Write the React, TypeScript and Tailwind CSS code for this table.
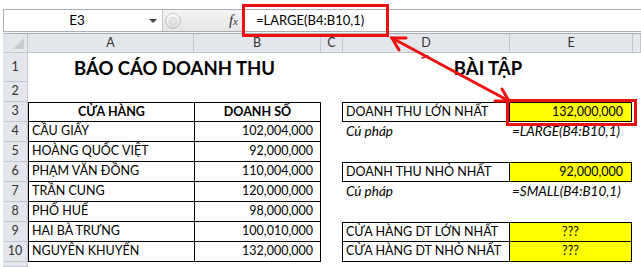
import React from 'react';

type Row = {
  n: number;
  a?: string;
  b?: string;
  d?: string;
  e?: string;
  kind?: 'box' | 'syntax' | 'none';
  eAlign?: 'right' | 'center' | 'left';
};

const rows: Row[] = [
  { n: 3, a: 'CỬA HÀNG', b: 'DOANH SỐ', d: 'DOANH THU LỚN NHẤT', e: '132,000,000', kind: 'box', eAlign: 'right' },
  { n: 4, a: 'CẦU GIẤY', b: '102,004,000', d: 'Cú pháp', e: '=LARGE(B4:B10,1)', kind: 'syntax' },
  { n: 5, a: 'HOÀNG QUỐC VIỆT', b: '92,000,000', kind: 'none' },
  { n: 6, a: 'PHẠM VĂN ĐỒNG', b: '110,004,000', d: 'DOANH THU NHỎ NHẤT', e: '92,000,000', kind: 'box', eAlign: 'right' },
  { n: 7, a: 'TRẦN CUNG', b: '120,000,000', d: 'Cú pháp', e: '=SMALL(B4:B10,1)', kind: 'syntax' },
  { n: 8, a: 'PHỐ HUẾ', b: '98,000,000', kind: 'none' },
  { n: 9, a: 'HAI BÀ TRƯNG', b: '100,010,000', d: 'CỬA HÀNG DT LỚN NHẤT', e: '???', kind: 'box', eAlign: 'center' },
  { n: 10, a: 'NGUYỄN KHUYẾN', b: '132,000,000', d: 'CỬA HÀNG DT NHỎ NHẤT', e: '???', kind: 'box', eAlign: 'center' },
];

function RowHead({ n, h = 'h-[20px]' }: { n?: number; h?: string }) {
  return (
    <div className={`w-[25px] ${h} shrink-0 bg-[#e3e6eb] border-r border-b border-[#c3c7cd] flex items-center justify-center text-[12.5px] not-italic font-normal text-[#333]`}>
      {n}
    </div>
  );
}

export default function App() {
  return (
    <div className="relative w-[641px] h-[267px] overflow-hidden bg-white text-black font-[family-name:Lato,'Liberation_Sans',sans-serif]">
      {/* formula bar */}
      <div className="h-[9px] bg-white" />
      <div className="flex h-[22px] border-t border-[#a9afb7] ml-[3px]">
        <div className="w-[159px] border-l border-[#a9afb7] bg-white flex items-center relative">
          <span className="flex-1 text-center text-[13.5px] pr-[12px]">E3</span>
          <span className="absolute right-[5px] top-[9px] w-0 h-0 border-l-[4px] border-r-[4px] border-t-[4px] border-l-transparent border-r-transparent border-t-[#444]" />
        </div>
        <div className="w-[80px] bg-gradient-to-b from-[#f4f4f4] to-[#e6e6e6] border-l border-[#c2c6cc] flex items-center">
          <div className="ml-[2px] w-[16px] h-[16px] rounded-full border border-[#c4c4c4] bg-gradient-to-b from-[#ffffff] to-[#d8d8d8] flex items-center justify-center">
            <div className="w-[8px] h-[8px] rounded-full bg-[#e8e8e8] border border-[#cfcfcf]" />
          </div>
          <span className="ml-auto mr-[4px] font-[family-name:'Liberation_Serif',serif] italic text-[15px] text-[#333] leading-none">
            f<span className="text-[11px]">x</span>
          </span>
        </div>
        <div className="flex-1 bg-white flex items-center pl-[14px] text-[13px]">=LARGE(B4:B10,1)</div>
      </div>
      <div className="h-[3px] ml-[3px] border-t border-b border-[#a9afb7] bg-[#f5f6f7]" />

      {/* column headers */}
      <div className="flex h-[19px] ml-[3px]">
        <div className="w-[25px] bg-[#e3e6eb] border-r border-b border-[#c3c7cd] relative">
          <svg className="absolute right-[3px] bottom-[3px]" width="11" height="11">
            <polygon points="11,0 11,11 0,11" fill="#c9ccd1" />
          </svg>
        </div>
        {[
          ['A', 'w-[166px]'],
          ['B', 'w-[127px]'],
          ['C', 'w-[22px]'],
          ['D', 'w-[167px]'],
          ['E', 'w-[123px]'],
          ['', 'flex-1'],
        ].map(([l, w]) => (
          <div key={l + w} className={`${w} bg-[#e3e6eb] border-r border-b border-[#c3c7cd] flex items-center justify-center text-[12.5px] text-[#333]`}>
            {l}
          </div>
        ))}
      </div>

      {/* row 1 */}
      <div className="flex h-[29px] ml-[3px]">
        <RowHead n={1} h="h-[29px]" />
        <div className="w-[293px] flex items-end justify-center pb-[5px] font-bold text-[18.5px] leading-none">BÁO CÁO DOANH THU</div>
        <div className="w-[22px]" />
        <div className="w-[290px] flex items-end justify-center pb-[5px] font-bold text-[18.5px] leading-none">BÀI TẬP</div>
      </div>
      {/* row 2 */}
      <div className="flex h-[20px] ml-[3px]">
        <RowHead n={2} />
      </div>

      {rows.map((r, i) => {
        const first = i === 0;
        const box = r.kind === 'box';
        const boxTop = box && r.n !== 10;
        return (
          <div key={r.n} className="flex h-[20px] ml-[3px] text-[12.5px] leading-none">
            <RowHead n={r.n} />
            <div className={`w-[166px] border-l border-b border-black flex items-center px-[3px] ${first ? 'border-t justify-center font-bold' : ''}`}>
              {r.a}
            </div>
            <div className={`w-[127px] border-l border-r border-b border-black flex items-center ${first ? 'border-t justify-center font-bold' : 'justify-end pr-[7px]'}`}>
              {r.b}
            </div>
            <div className="w-[21px]" />
            {r.kind === 'syntax' ? (
              <>
                <div className="w-[167px] flex items-center px-[4px] italic text-[13.5px]">{r.d}</div>
                <div className="w-[123px] flex items-center pl-[3px] italic text-[13.5px] whitespace-nowrap">{r.e}</div>
              </>
            ) : box ? (
              <>
                <div className={`w-[167px] border-l border-b border-black flex items-center px-[3px] whitespace-nowrap ${boxTop ? 'border-t' : ''}`}>
                  {r.d}
                </div>
                <div
                  className={`w-[123px] bg-[#ffff00] border-l border-r border-b border-black flex items-center ${boxTop ? 'border-t' : ''} ${
                    r.eAlign === 'center' ? 'justify-center' : 'justify-end pr-[8px]'
                  }`}
                >
                  {r.e}
                </div>
              </>
            ) : null}
          </div>
        );
      })}
      <div className="flex h-[5px] ml-[3px]">
        <RowHead h="h-[5px]" />
      </div>

      {/* red highlights */}
      <div className="absolute left-[242px] top-[4px] w-[147px] h-[33px] border-[3px] border-[#ee1111]" />
      <div className="absolute left-[506px] top-[99px] w-[131px] h-[27px] border-[3px] border-[#ee1111]" />
      <svg className="absolute left-0 top-0 pointer-events-none" width="641" height="267">
        <g stroke="#ee1111" strokeWidth="3" strokeLinecap="round" fill="none">
          <line x1="392" y1="38" x2="509" y2="101" />
          <polyline points="399,50 392,38 406,38" />
          <polyline points="502,89 509,101 495,101" />
          <line x1="422" y1="58" x2="428" y2="56" strokeWidth="1.5" />
        </g>
      </svg>
    </div>
  );
}
